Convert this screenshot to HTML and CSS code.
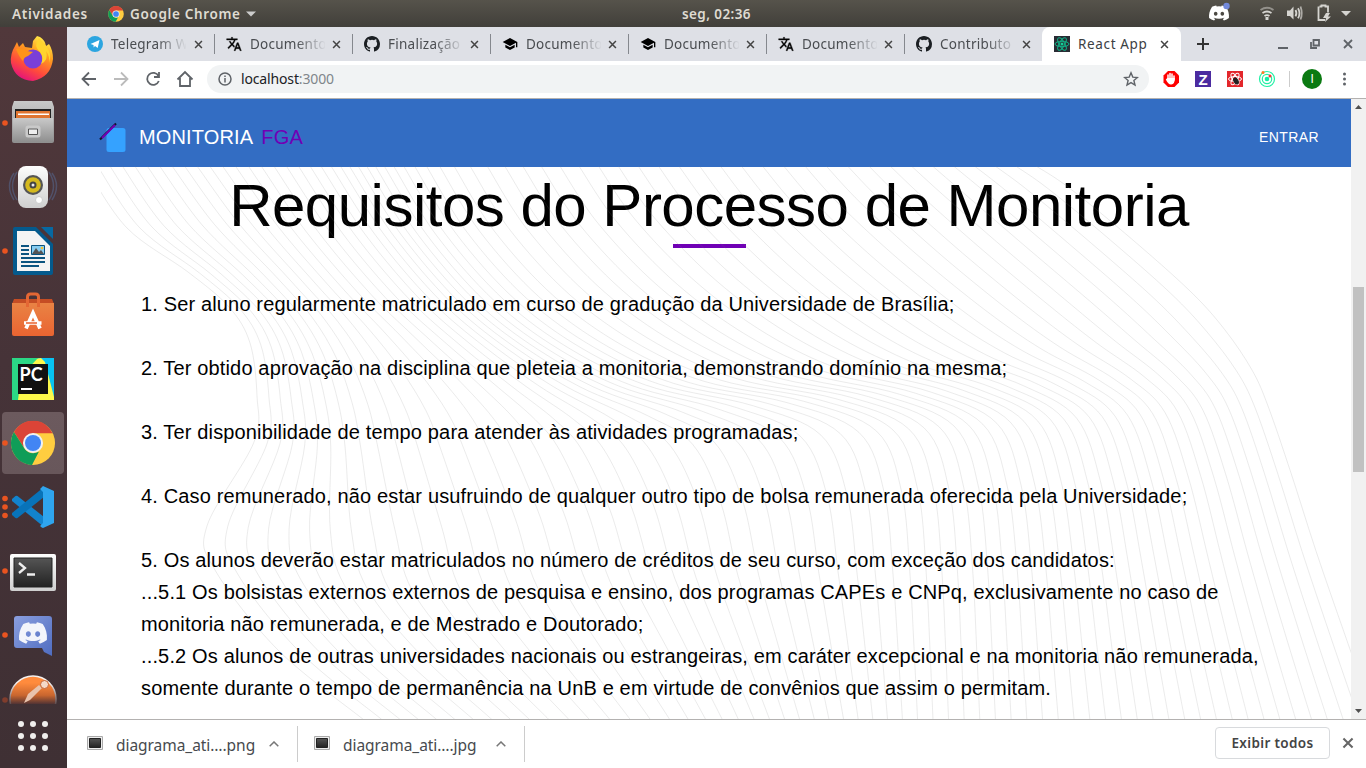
FILE: index.html
```html
<!DOCTYPE html>
<html lang="pt-BR">
<head>
<meta charset="utf-8">
<title>React App</title>
<link rel="stylesheet" href="styles.css">
</head>
<body>
<svg class="defs" width="0" height="0">
  <defs>
    <linearGradient id="ffx" x1="0.8" y1="0" x2="0.3" y2="1"><stop offset="0" stop-color="#fff44f"/><stop offset=".35" stop-color="#ffa01e"/><stop offset=".7" stop-color="#ff4a3c"/><stop offset="1" stop-color="#e2107f"/></linearGradient>
    <linearGradient id="metal" x1="0" y1="0" x2="0" y2="1"><stop offset="0" stop-color="#c9c9c9"/><stop offset="1" stop-color="#8f8f8f"/></linearGradient>
    <linearGradient id="white" x1="0" y1="0" x2="0" y2="1"><stop offset="0" stop-color="#fdfdfd"/><stop offset="1" stop-color="#cfcfcf"/></linearGradient>
    <linearGradient id="bag" x1="0" y1="0" x2="0" y2="1"><stop offset="0" stop-color="#e98344"/><stop offset="1" stop-color="#ea6431"/></linearGradient>
    <linearGradient id="term" x1="0" y1="0" x2="0" y2="1"><stop offset="0" stop-color="#555"/><stop offset="1" stop-color="#222"/></linearGradient>
    <linearGradient id="disc" x1="0" y1="0" x2="1" y2="1"><stop offset="0" stop-color="#8a9fdf"/><stop offset="1" stop-color="#4f6cc0"/></linearGradient>
    <linearGradient id="post" x1="0" y1="0" x2="0" y2="1"><stop offset=".15" stop-color="#ff8b3d"/><stop offset=".42" stop-color="#c9662f"/><stop offset=".62" stop-color="#4b3034"/></linearGradient>
    <linearGradient id="ring" x1="0" y1="0" x2="0" y2="1"><stop offset=".15" stop-color="#f4f0ee"/><stop offset=".62" stop-color="#5b484a"/></linearGradient>
    <symbol id="chrome" viewBox="0 0 46 46">
      <circle cx="23" cy="23" r="22.5" fill="#ffcd40"/>
      <path d="M23 13H43A22 22 0 0 0 3.500 11.800L14 28z" fill="#db4437"/>
      <path d="M3.500 11.800 14.300 28.500C17 33 23 35 29 32L22 45.500A22.500 22.500 0 0 1 3.500 11.800z" fill="#0f9d58"/>
      <circle cx="23" cy="23" r="10.300" fill="#f1f1f1"/><circle cx="23" cy="23" r="8.200" fill="#4285f4"/>
    </symbol>
    <symbol id="discord" viewBox="0 0 24 24">
      <path fill-rule="evenodd" d="M20.317 4.370a19.790 19.790 0 0 0-4.885-1.515l-.079.037c-.21.375-.444.865-.608 1.250a18.270 18.270 0 0 0-5.487 0 12.640 12.640 0 0 0-.617-1.250l-.079-.037A19.740 19.740 0 0 0 3.677 4.370C.533 9.046-.32 13.580.099 18.058a19.900 19.900 0 0 0 6.024 3.086c.546-.658.958-1.323 1.310-2.022l-1.921-1.126.450-.429c3.927 1.793 8.180 1.793 12.061 0l.445.429-1.914 1.126c.360.698.772 1.363 1.309 2.022a19.840 19.840 0 0 0 6.034-3.085c.5-5.177-.838-9.674-3.580-13.689zM8.020 15.330c-1.183 0-2.157-1.086-2.157-2.419s.955-2.419 2.157-2.419c1.210 0 2.176 1.095 2.157 2.419 0 1.333-.956 2.419-2.157 2.419zm7.975 0c-1.183 0-2.157-1.086-2.157-2.419s.955-2.419 2.157-2.419c1.210 0 2.176 1.095 2.157 2.419 0 1.333-.946 2.419-2.157 2.419z"/>
    </symbol>
    <symbol id="translate" viewBox="0 0 24 24"><path d="M12.870 15.070l-2.540-2.510.030-.030c1.740-1.940 2.980-4.170 3.710-6.530H17V4h-7V2H8v2H1v1.990h11.170C11.500 7.920 10.440 9.750 9 11.350 8.070 10.320 7.300 9.190 6.690 8h-2c.73 1.630 1.730 3.170 2.980 4.560l-5.090 5.020L4 19l5-5 3.110 3.110.76-2.040zM18.500 10h-2L12 22h2l1.120-3h4.750L21 22h2l-4.500-12zm-2.620 7l1.620-4.330L19.120 17h-3.240z" stroke="#111" stroke-width=".6"/></symbol>
    <symbol id="school" viewBox="0 0 24 24"><path d="M5 13.180v4L12 21l7-3.820v-4L12 17l-7-3.820zM12 3L1 9l11 6 9-4.910V17h2V9L12 3z"/></symbol>
    <symbol id="github" viewBox="0 0 16 16"><path fill="#1b1f23" d="M8 0C3.580 0 0 3.580 0 8c0 3.540 2.290 6.530 5.470 7.590.4.070.55-.17.55-.38 0-.19-.01-.82-.01-1.490-2.010.37-2.530-.49-2.690-.94-.09-.23-.48-.94-.82-1.130-.28-.15-.68-.52-.01-.53.63-.01 1.080.58 1.230.82.72 1.210 1.870.87 2.330.66.07-.52.28-.87.51-1.070-1.780-.2-3.640-.89-3.640-3.950 0-.87.31-1.590.82-2.150-.08-.2-.36-1.020.08-2.120 0 0 .67-.21 2.200.82a7.500 7.500 0 0 1 4 0c1.530-1.040 2.200-.82 2.200-.82.44 1.100.16 1.920.08 2.120.51.56.82 1.270.82 2.150 0 3.070-1.870 3.750-3.650 3.950.29.25.54.73.54 1.480 0 1.070-.01 1.930-.01 2.200 0 .21.15.46.55.38A8 8 0 0 0 16 8c0-4.420-3.580-8-8-8z"/></symbol>
    <symbol id="x" viewBox="0 0 10 10"><path d="M1.200 1.200l7.600 7.600M8.800 1.200L1.200 8.800" fill="none" stroke="currentColor" stroke-width="1.700"/></symbol>
    <symbol id="shot" viewBox="0 0 16 14"><path d="M.5.5h15v13H.5z" fill="#eee" stroke="#aaa"/><path d="M2.500 2.500h11v9h-11z" fill="url(#term)" stroke="#222"/></symbol>
    <symbol id="up" viewBox="0 0 10 6"><path d="M.7 5.300L5 1l4.300 4.300" fill="none" stroke="#777" stroke-width="1.500"/></symbol>
  </defs>
</svg>

<header class="panel">
  <span class="panel-activities">Atividades</span>
  <svg class="panel-chrome" width="16" height="16"><use href="#chrome"/></svg>
  <span class="panel-app">Google Chrome</span>
  <svg class="panel-caret" width="10" height="6"><path d="M0 .5h10L5 5.500z" fill="#ccc"/></svg>
  <span class="panel-clock">seg, 02:36</span>
  <svg class="panel-tray" width="150" height="27" viewBox="1206 0 150 27">
    <svg x="1208" y="3" width="22" height="20"><use href="#discord" fill="#fff"/></svg>
    <circle cx="1226.500" cy="6" r="3.200" fill="#7289da"/>
    <g fill="none" stroke="#d5d4d0" stroke-width="1.800"><path d="M1260.500 10q6.500-4.500 13 0" opacity=".5"/><path d="M1262.500 13q4.500-3 9 0M1264.500 16q2.500-1.800 5 0"/><path d="M1267 17v3" stroke-width="3"/><path d="M1295.500 10q1.800 3.200 0 6.400M1298 8.200q3 5 0 10"/><path d="M1300.500 6.500q2.500 7 0 13" opacity=".7"/><path d="M1319.500 6.500h2v-1h4v1h2.500v6M1318.500 6.500v13.500h6.500"/></g>
    <path d="M1287 10.500h3l3.500-4v13l-3.500-3.500h-3zM1326 13l-3 5h3l-1 4 6-5.500h-3l2-3.500zM1341 11h10l-5 5z" fill="#d5d4d0"/>
  </svg>
</header>

<div class="desktop">
  <aside class="dock">
    <div class="dock-list">
      <svg class="dock-item"><path d="M17 15l2 5 4-4 2 4 7 1 1-7 4-5 3 1q5 3 6 9l3-2q4 6 4 15-2 18-20 22-18-1-22-18-1-9 4-17z" fill="url(#ffx)"/><circle cx="33" cy="32" r="9.500" fill="#7a3fd8"/><path d="M16 22q8-2 11 2l6 1-5 4q-4 1-5 5-4-4-7-12z" fill="#ff9418"/><path d="M39 11q-6 8 1 14 4 5 1 12 8-4 5-13 4 5 3 12 3-9-2-16z" fill="#ffd42e"/></svg>
      <svg class="dock-item"><circle cx="5" cy="32" r="2.800" fill="#e95420"/><path d="M14 10h38l2 6v34q0 2-2 2H14q-2 0-2-2V16z" fill="url(#metal)"/><path d="M15 18h36v10H15z" fill="#222"/><path d="M16 20h34v7H16z" fill="#e07531"/><path d="M18 22.500h31v1.500H18z" fill="#fff"/><path d="M13 27h40v24H13z" fill="url(#metal)"/><rect x="27" y="36" width="12" height="9" rx="1" fill="#ddd" stroke="#c9c9c9" stroke-width="3"/><path d="M28.500 38h9v5.500h-9z" fill="#eee" stroke="#555"/></svg>
      <svg class="dock-item"><g fill="none" stroke="#56688f" stroke-width="1.500" opacity=".55"><path d="M14 18q-9 13 0 27M17 17q-9 14 0 28M52 18q9 13 0 27M49 17q9 14 0 28"/></g><rect x="18" y="11" width="30" height="42" rx="8" fill="url(#white)"/><circle cx="33" cy="30" r="10" fill="#555"/><circle cx="33" cy="30" r="7.800" fill="#d5b91e"/><circle cx="33" cy="30" r="3.500" fill="#444"/><circle cx="33" cy="30" r="1.500" fill="#eee"/><circle cx="39" cy="45" r="3.500" fill="#fff" stroke="#ccc"/></svg>
      <svg class="dock-item"><circle cx="5" cy="32" r="2.800" fill="#e95420"/><path d="M15 8h21l17 17v29q0 2-2 2H15q-2 0-2-2V10q0-2 2-2z" fill="#045a8d"/><path d="M17 12h18l15 15v25H17z" fill="#f4f4f4"/><path d="M41 8h12v12z" fill="#0769a2"/><path d="M21 27h8M21 31h8M21 35h8M21 39h24M21 43h24M21 47h18" stroke="#0b5480" stroke-width="2"/><path d="M31.500 26.500h13v9h-13z" fill="#87cdf1" stroke="#0b5480"/><path d="M32 35l4-6 3 4 2-2 3 4z" fill="#555"/><circle cx="42" cy="29" r="1.300" fill="#f9c22e"/></svg>
      <svg class="dock-item"><path d="M14 16h38l2 5H12z" fill="#c54d24"/><path d="M12 20h42v31q0 2-2 2H14q-2 0-2-2z" fill="url(#bag)"/><path d="M27.500 24v-10q0-3 3-3h5q3 0 3 3v10" fill="none" stroke="#e46734" stroke-width="3"/><path d="M26 45.500l7-15.500 7 15.500M24 40h17.500" fill="none" stroke="#fff" stroke-width="3.700"/><path d="M26 40h11" stroke="#e8602d" stroke-width="1.500"/></svg>
      <svg class="dock-item"><path d="M12 11h42v42H12z" fill="#21d789"/><path d="M38 11h16v42L44 35z" fill="#07c3f2"/><path d="M23 14l18-3 4 4 9 35v3H18z" fill="#fcf84a"/><path d="M12 11h26L20 30l-3 23h-5z" fill="#2bd886"/><path d="M18 17h30v30H18z" fill="#111"/><text x="19.500" y="34" class="pc">PC</text><path d="M21 42h11" stroke="#fff" stroke-width="2"/></svg>
      <div class="dock-active"><svg class="dock-item"><circle cx="5" cy="32" r="2.800" fill="#e95420"/><svg x="10.500" y="9.500" width="45" height="45"><use href="#chrome"/></svg></svg></div>
      <svg class="dock-item"><g fill="#e95420"><circle cx="5" cy="23.500" r="2.800"/><circle cx="5" cy="32" r="2.800"/><circle cx="5" cy="40.500" r="2.800"/></g><path d="M12 24l3.500-3q1-.6 2 0L44 42v10L12 26z" fill="#1283cd"/><path d="M12 40l3.500 3q1 .6 2 0L44 22V12L12 38z" fill="#0873b9"/><path d="M43 11l11 5v32l-11 5q-1 0-3-2l3-3V17l-3-3z" fill="#2fa5ee"/></svg>
      <svg class="dock-item"><circle cx="5" cy="32" r="2.800" fill="#e95420"/><rect x="10" y="15" width="46" height="37" rx="2" fill="url(#white)"/><path d="M14 19h38v29H14z" fill="url(#term)" stroke="#222"/><path d="M19 24l6 5-6 5M27 35.500h8" fill="none" stroke="#eee" stroke-width="2.300"/></svg>
      <svg class="dock-item"><circle cx="5" cy="32" r="2.800" fill="#e95420"/><path d="M17 13h32q3 0 3 3v37l-8-4-2-4H17q-3 0-3-3V16q0-3 3-3z" fill="url(#disc)"/><svg x="18" y="16" width="30" height="28"><use href="#discord" fill="#f3f5fb"/></svg></svg>
      <svg class="dock-item"><circle cx="5" cy="33" r="2.800" fill="#803d2d"/><circle cx="33" cy="32" r="23" fill="url(#post)" stroke="url(#ring)" stroke-width="1.500"/><path d="M24 36l4-9 11-9 3 3-12 12z" fill="#e8c3ad"/><circle cx="44.500" cy="17.500" r="4" fill="#f5d9c9" stroke="#c6673a"/></svg>
    </div>
    <svg class="dock-apps" width="67" height="64"><g fill="#f0efed"><circle cx="21" cy="20" r="3"/><circle cx="33" cy="20" r="3"/><circle cx="45" cy="20" r="3"/><circle cx="21" cy="32" r="3"/><circle cx="33" cy="32" r="3"/><circle cx="45" cy="32" r="3"/><circle cx="21" cy="44" r="3"/><circle cx="33" cy="44" r="3"/><circle cx="45" cy="44" r="3"/></g></svg>
  </aside>

  <main class="browser">
    <nav class="tabs">
      <div class="tab first"><svg class="fav" viewBox="0 0 16 16"><circle cx="8" cy="8" r="8" fill="#2ca5e0"/><path d="M3.500 8l9-4-1.800 8-2.700-2-1.300 1.600L6.500 9z" fill="#fff"/></svg><span>Telegram W</span><svg class="close"><use href="#x"/></svg></div>
      <div class="tab"><svg class="fav"><use href="#translate"/></svg><span>Documento</span><svg class="close"><use href="#x"/></svg></div>
      <div class="tab"><svg class="fav"><use href="#github"/></svg><span>Finalização</span><svg class="close"><use href="#x"/></svg></div>
      <div class="tab"><svg class="fav"><use href="#school"/></svg><span>Documento</span><svg class="close"><use href="#x"/></svg></div>
      <div class="tab"><svg class="fav"><use href="#school"/></svg><span>Documento</span><svg class="close"><use href="#x"/></svg></div>
      <div class="tab"><svg class="fav"><use href="#translate"/></svg><span>Documento</span><svg class="close"><use href="#x"/></svg></div>
      <div class="tab"><svg class="fav"><use href="#github"/></svg><span>Contributo</span><svg class="close"><use href="#x"/></svg></div>
      <div class="tab active"><svg class="fav" viewBox="0 0 16 16"><path d="M0 0h16v16H0z" fill="#282c34"/><g fill="none" stroke="#12b287"><ellipse cx="8" cy="8" rx="7" ry="2.700"/><ellipse cx="8" cy="8" rx="7" ry="2.700" transform="rotate(60 8 8)"/><ellipse cx="8" cy="8" rx="7" ry="2.700" transform="rotate(120 8 8)"/></g><circle cx="8" cy="8" r="1.500" fill="#12d198"/></svg><span>React App</span><svg class="close"><use href="#x"/></svg></div>
      <svg class="window-controls" width="185" height="34" viewBox="1181 27 185 34"><g fill="none" stroke="#333" stroke-width="2"><path d="M1197 44h12M1203 38v12"/><g stroke="#5f6368" stroke-width="1.800"><path d="M1278 48h10M1313.500 40h5.500v5.500h-5.500zM1311 42v6h6"/><path d="M1344 40l8 8M1352 40l-8 8"/></g></g></svg>
    </nav>

    <div class="toolbar">
      <svg class="nav-icons" width="132" height="36" viewBox="75 61 132 36"><g fill="none" stroke="#5f6368" stroke-width="1.800"><path d="M96 79H83M89 72.500L82.500 79l6.500 6.500"/><path d="M114 79h13M121 72.500l6.500 6.500-6.500 6.500" stroke="#bbb"/><path d="M158.500 76a6 6 0 1 0 .300 5M159 72v5h-5"/><path d="M177.500 79.500l7.500-7.500 7.500 7.500M180 78v8h10v-8"/></g></svg>
      <div class="address">
        <svg width="14" height="14" viewBox="0 0 14 14"><circle cx="7" cy="7" r="6" fill="none" stroke="#5f6368" stroke-width="1.500"/><path d="M7 6v4.500M7 3.500v1.500" stroke="#5f6368" stroke-width="1.500"/></svg>
        <span class="url">localhost<i>:3000</i></span>
        <svg class="star" width="16" height="16" viewBox="0 0 16 16"><path d="M8 1.800l1.800 4.300 4.600.4-3.500 3 1.100 4.500-4-2.400L4 14l1.100-4.500-3.500-3 4.600-.4z" fill="none" stroke="#5f6368" stroke-width="1.400"/></svg>
      </div>
      <svg class="extensions" width="209" height="36" viewBox="1157 61 209 36">
        <path d="M1168 71h6.500l4.500 4.500v7l-4.500 4.500h-6.500l-4.500-4.500v-7z" fill="#f00"/><path d="M1168 79v-4M1170 79v-5.500M1172 79v-5M1174 80v-4" stroke="#fff" stroke-width="1.500" stroke-linecap="round"/><path d="M1167.300 78h7.500q0 7-4 6.500-2.500 0-5-5z" fill="#fff"/>
        <path d="M1195 71h16v16h-16z" fill="#4b2ba0"/><text x="1198.500" y="84.500" class="zed">Z</text>
        <path d="M1227 71h16v16h-16z" fill="#e3262b"/><g fill="none" stroke="#fff"><ellipse cx="1235" cy="79" rx="6.500" ry="2.500"/><ellipse cx="1235" cy="79" rx="6.500" ry="2.500" transform="rotate(60 1235 79)"/><ellipse cx="1235" cy="79" rx="6.500" ry="2.500" transform="rotate(120 1235 79)"/></g><ellipse cx="1236" cy="81" rx="2.500" ry="3.700" fill="#222" transform="rotate(-30 1236 81)"/>
        <g fill="none" stroke="#22f0a5" stroke-width="1.200"><circle cx="1267" cy="79" r="7.500"/><circle cx="1267" cy="79" r="4.700"/></g><circle cx="1267" cy="79" r="2.300" fill="#11eda2"/><circle cx="1263" cy="72.500" r="1.500" fill="#ff7a22"/><circle cx="1270" cy="76" r="1.500" fill="#f33"/>
        <path d="M1289.500 71v16" stroke="#ccc"/><circle cx="1312" cy="79" r="10" fill="#0b7a12"/><text x="1310.500" y="83" class="avatar">I</text>
        <g fill="#5f6368"><circle cx="1344.500" cy="74" r="1.500"/><circle cx="1344.500" cy="79" r="1.500"/><circle cx="1344.500" cy="84" r="1.500"/></g>
      </svg>
    </div>

    <div class="viewport">
      <div class="page">
        <div class="appbar">
          <svg class="logo" width="32" height="32" viewBox="99 121 32 32"><rect x="106.500" y="128" width="19" height="24" rx="2.500" fill="#35a2ff"/><path d="M100 139.500l16-16" stroke="#15102d" stroke-width="2.200"/><path d="M102 138l13-13" stroke="#7300b4" stroke-width="2"/></svg>
          <span class="brand">MONITORIA</span><span class="brand fga">FGA</span>
          <span class="login">ENTRAR</span>
        </div>
        <section class="content">
          <h1>Requisitos do Processo de Monitoria</h1>
          <div class="rule"></div>
          <svg class="waves" id="waves" width="1250" height="553" viewBox="101 166 1250 553"></svg>
          <div class="requirements">
            <p>1. Ser aluno regularmente matriculado em curso de gradução da Universidade de Brasília;</p>
            <p>2. Ter obtido aprovação na disciplina que pleteia a monitoria, demonstrando domínio na mesma;</p>
            <p>3. Ter disponibilidade de tempo para atender às atividades programadas;</p>
            <p>4. Caso remunerado, não estar usufruindo de qualquer outro tipo de bolsa remunerada oferecida pela Universidade;</p>
            <p>5. Os alunos deverão estar matriculados no número de créditos de seu curso, com exceção dos candidatos:<br>...5.1 Os bolsistas externos externos de pesquisa e ensino, dos programas CAPEs e CNPq, exclusivamente no caso de<br>monitoria não remunerada, e de Mestrado e Doutorado;<br>...5.2 Os alunos de outras universidades nacionais ou estrangeiras, em caráter excepcional e na monitoria não remunerada,<br>somente durante o tempo de permanência na UnB e em virtude de convênios que assim o permitam.</p>
          </div>
        </section>
      </div>
      <div class="scrollbar"><svg width="15" height="15"><path d="M4 10h7L7.500 6z" fill="#505050"/></svg><div class="thumb"></div><svg width="15" height="15"><path d="M4 5h7L7.500 9z" fill="#505050"/></svg></div>
    </div>

    <footer class="downloads">
      <div class="download"><svg width="16" height="14"><use href="#shot"/></svg><span>diagrama_ati….png</span><svg class="chev" width="10" height="6"><use href="#up"/></svg></div>
      <div class="download"><svg width="16" height="14"><use href="#shot"/></svg><span>diagrama_ati….jpg</span><svg class="chev" width="10" height="6"><use href="#up"/></svg></div>
      <button class="show-all">Exibir todos</button>
      <svg class="dismiss" width="12" height="12"><use href="#x"/></svg>
    </footer>
  </main>
</div>
<script src="waves.js"></script>
</body>
</html>
```
FILE: styles.css
```css
* { box-sizing: border-box; }
body { margin: 0; width: 1366px; height: 768px; overflow: hidden; font-family: "Noto Sans", sans-serif; }
.defs { position: absolute; }
svg { display: block; flex: none; }

.panel { height: 27px; display: flex; align-items: center; background: linear-gradient(#56534b, #413f3a); color: #dfdbd2; font-size: 13.5px; font-weight: 600; white-space: nowrap; }
.panel-activities { width: 96px; padding-left: 12px; letter-spacing: .7px; }
.panel-chrome { margin-left: 12px; }
.panel-app { width: 116px; margin-left: 6px; letter-spacing: .65px; }
.panel-clock { margin-left: 426px; width: 80px; letter-spacing: .4px; }
.panel-tray { margin-left: auto; margin-right: 10px; }

.desktop { display: flex; height: 741px; }
.dock { width: 67px; background: linear-gradient(#51383b, #463338 45%, #3f3034); }
.dock-list { height: 677px; overflow: hidden; }
.dock-item { width: 67px; height: 64px; }
.dock-active { display: flex; background: linear-gradient(#6c5a5e, #68575b); width: 62px; height: 62px; margin: 1px 0 1px 2px; border-radius: 4px; }
.dock-active .dock-item { margin-left: -2px; margin-top: -1px; }
.pc { font: 700 18px Lato, sans-serif; fill: #fff; }

.browser { width: 1299px; display: flex; flex-direction: column; background: #fff; }
.tabs { height: 34px; display: flex; padding-left: 9px; background: #dee0e6; }
.tab { width: 138px; display: flex; align-items: center; padding-left: 12px; background: linear-gradient(#85888e, #85888e) 0 7px / 1px 20px no-repeat; color: #4a4d51; }
.tab.first { background: none; padding-left: 11px; }
.tab.first .close { margin-left: 8px; }
.tab.active { width: 139px; background: #fff; border-radius: 8px 8px 0 0; }
.fav { width: 16px; height: 16px; }
.tab span { width: 75px; margin-left: 8px; white-space: nowrap; font-size: 13.5px; letter-spacing: .25px; -webkit-mask-image: linear-gradient(90deg, #000 46px, transparent 76px); mask-image: linear-gradient(90deg, #000 46px, transparent 76px); }
.tab.active span { -webkit-mask-image: none; mask-image: none; color: #3c4043; letter-spacing: .65px; }
.close { width: 9px; height: 9px; margin-left: 7px; color: #444; }

.toolbar { height: 37px; display: flex; align-items: center; padding-left: 8px; }
.address { width: 942px; height: 28px; border-radius: 14px; background: #f1f3f4; display: flex; align-items: center; padding: 0 10px 0 11px; }
.address, .nav-icons, .extensions { margin-bottom: 1px; }
.url { margin: 0 0 2px 9px; font-size: 14px; letter-spacing: -.15px; color: #202124; }
.url i { font-style: normal; color: #80868b; }
.star { margin-left: auto; }
.extensions { margin-left: 8px; }
.zed { font: bold 15px "Liberation Sans", sans-serif; fill: #fff; }
.avatar { font: 12px "Liberation Sans", sans-serif; fill: #fff; }

.viewport { height: 621px; display: flex; border-top: 1px solid #b3b1b0; }
.page { width: 1284px; overflow: hidden; font-family: "Liberation Sans", Arial, sans-serif; color: #000; }
.appbar { height: 68px; display: flex; align-items: center; padding: 8px 32px 0; background: #336dc3; color: #fff; }
.brand { font-size: 20px; letter-spacing: .15px; margin-left: 8px; }
.fga { color: #7000b5; }
.login { margin-left: auto; font-size: 14px; letter-spacing: .4px; }
.content { position: relative; height: 552px; }
h1 { margin: 0; padding-top: 3px; text-align: center; font-size: 60px; font-weight: 400; line-height: 72px; letter-spacing: -.5px; white-space: nowrap; }
.rule { width: 73px; height: 4px; margin: 2px 0 0 606px; background: #7000b5; }
.waves { position: absolute; left: 34px; top: -1px; }
.requirements { position: relative; padding: 40px 0 0 74px; font-size: 20px; line-height: 32px; letter-spacing: .15px; white-space: nowrap; }
.requirements p { margin: 0 0 32px; }
.scrollbar { width: 15px; background: #f1f1f1; display: flex; flex-direction: column; align-items: center; }
.thumb { width: 11px; height: 185px; margin: 173px 0 auto; background: #c1c1c1; }

.downloads { height: 49px; display: flex; align-items: center; border-top: 1px solid #b3b1b0; }
.download { height: 36px; width: 231px; display: flex; align-items: center; padding-left: 20px; border-right: 1px solid #ccc; color: #474a4e; }
.download + .download { width: 227px; padding-left: 16px; }
.download svg:first-child { margin-bottom: 3px; }
.download span { width: 140px; margin: 2px 0 0 13px; font-size: 15.5px; letter-spacing: -.05px; white-space: nowrap; }
.chev { margin-left: 13px; }
.show-all { margin: -2px 0 0 auto; width: 115px; height: 32px; padding: 0; background: #fff; border: 1px solid #d8dadd; border-radius: 4px; font: 600 13.5px "Noto Sans", sans-serif; letter-spacing: .35px; color: #444; }
.dismiss { margin: 0 12px 2px; color: #666; }
```
FILE: waves.js
```js
// Key contours, each at a line index; the lines between are blended smoothly.
const keys = [
  { at: 0, pts: [[85,166],[127,228],[188,272],[229,307],[250,343],[257,396],[254,442],[207,526],[215,570],[278,650],[364,720]] },
  { at: 9, pts: [[197,166],[240,225],[290,280],[325,320],[350,360],[368,405],[378,448],[395,530],[412,590],[463,655],[530,720]] },
  { at: 18, pts: [[310,166],[355,235],[410,300],[460,345],[510,385],[555,420],[582,450],[610,510],[632,580],[668,650],[706,720]] },
  { at: 33, pts: [[470,166],[510,230],[570,295],[640,345],[720,380],[820,400],[893,430],[918,491],[926,570],[930,650],[933,720]] },
  { at: 61, pts: [[1036,166],[1068,187],[1127,235],[1190,291],[1225,330],[1252,370],[1268,406],[1291,473],[1316,551],[1345,635],[1375,720]] }
];

function smooth(p) {
  let d = "M" + p[0];
  for (let i = 0; i < p.length - 1; i++) {
    const a = p[i - 1] || p[i], b = p[i], c = p[i + 1], e = p[i + 2] || c;
    d += "C" + [b[0] + (c[0] - a[0]) / 6, b[1] + (c[1] - a[1]) / 6, c[0] - (e[0] - b[0]) / 6, c[1] - (e[1] - b[1]) / 6, c[0], c[1]];
  }
  return d;
}

function slope(k, i, axis) {
  const a = keys[Math.max(k - 1, 0)], b = keys[Math.min(k + 1, keys.length - 1)];
  return (b.pts[i][axis] - a.pts[i][axis]) / (b.at - a.at);
}

function blend(k, t, i, axis) {
  const span = keys[k + 1].at - keys[k].at;
  const t2 = t * t, t3 = t2 * t;
  return keys[k].pts[i][axis] * (2 * t3 - 3 * t2 + 1)
    + slope(k, i, axis) * span * (t3 - 2 * t2 + t)
    + keys[k + 1].pts[i][axis] * (3 * t2 - 2 * t3)
    + slope(k + 1, i, axis) * span * (t3 - t2);
}

let d = smooth(keys[4].pts);
for (let k = 0; k < 4; k++) {
  const span = keys[k + 1].at - keys[k].at;
  for (let s = 0; s < span; s++) {
    d += smooth(keys[k].pts.map((p, i) => [blend(k, s / span, i, 0), blend(k, s / span, i, 1)]));
  }
}
const path = document.createElementNS("http://www.w3.org/2000/svg", "path");
path.setAttribute("d", d);
path.setAttribute("fill", "none");
path.setAttribute("stroke", "rgba(128,128,128,.16)");
document.getElementById("waves").append(path);
```
